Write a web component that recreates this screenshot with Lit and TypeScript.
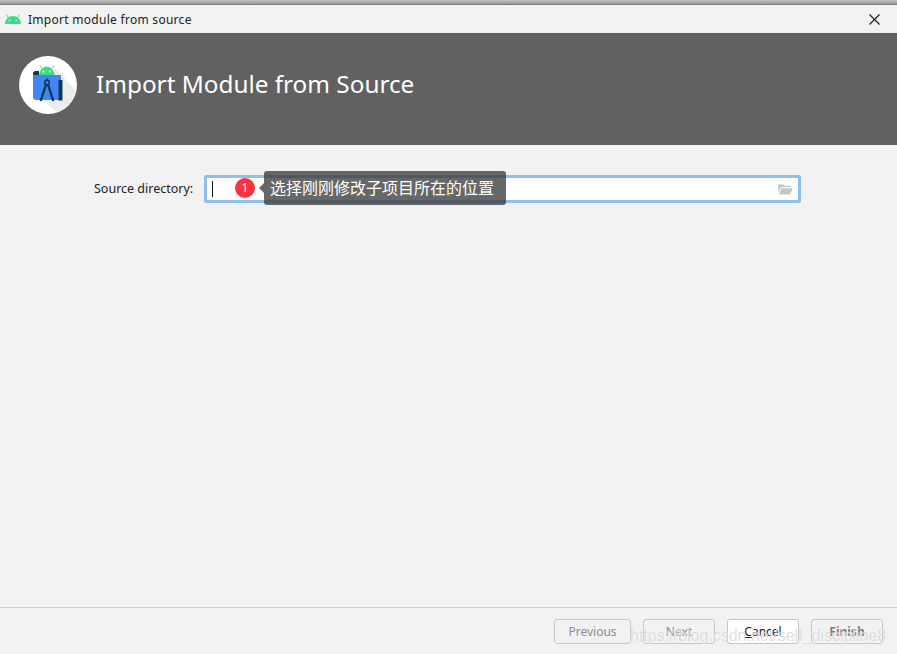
import { LitElement, html, css } from "lit";
import { customElement } from "lit/decorators.js";

@customElement("app-root")
export class AppRoot extends LitElement {
  static styles = css`
    :host { display: flex; flex-direction: column; width: 897px; height: 654px; background: #f2f2f2; overflow: hidden; position: relative; font-family: "Noto Sans", "Noto Sans CJK SC", sans-serif; color: #1a1a1a; }
    .topstrip { height: 5px; flex: none; background: linear-gradient(#c4c4c4, #a0a0a0 70%, #6a6a6a); }
    .titlebar { height: 28px; flex: none; display: flex; align-items: center; padding: 0 17px 0 5px; gap: 7px; font-size: 12px; letter-spacing: 0.28px; color: #222; background: #f2f2f2; }
    .titlebar .t { flex: 1; }
    .banner { height: 112px; box-sizing: border-box; flex: none; background: #616161; display: flex; align-items: center; padding: 0 0 8px 19px; gap: 19px; }
    .logo { width: 58px; height: 58px; flex: none; display: block; }
    .banner h1 { margin: 0 0 3px; font-size: 24.3px; font-weight: 400; color: #fff; }
    .content { flex: 1; padding: 30px 96px 0 94px; display: flex; align-items: flex-start; gap: 11px; }
    .label { font-size: 12.5px; line-height: 28px; height: 28px; white-space: nowrap; color: #222; }
    .field { flex: 1; height: 28px; box-sizing: border-box; border: 3px solid #90bfee; border-radius: 2px; background: #fff; display: flex; align-items: center; padding: 0 5px 0 5px; justify-content: space-between; }
    .caret { width: 1px; height: 16px; background: #111; }
    .footer { height: 47px; box-sizing: border-box; flex: none; border-top: 1px solid #d0d0d0; display: flex; justify-content: flex-end; align-items: flex-start; padding: 11px 14px 0 0; gap: 12px; }
    .btn { height: 25px; box-sizing: border-box; border: 1px solid #c8c8c8; border-radius: 3px; font-size: 12px; line-height: 23px; text-align: center; color: #8c8c8c; width: 72px; }
    .btn.prev { width: 77px; }
    .btn.cancel { background: #fff; border-color: #c4c4c4; color: #1a1a1a; }
    .btn.finish { font-weight: 700; color: #7e7e7e; }
    .u { text-decoration: underline; }
    .badge { position: absolute; left: 235px; top: 178px; width: 20px; height: 20px; border-radius: 50%; background: #f9333b; color: #fff; font-size: 12px; line-height: 20px; text-align: center; }
    .tip { position: absolute; left: 264px; top: 171px; width: 242px; height: 34px; box-sizing: border-box; background: rgba(60, 60, 60, 0.78); border-radius: 3px; color: #fff; font-size: 16px; line-height: 34px; padding-left: 6px; white-space: nowrap; }
    .tip::before { content: ""; position: absolute; left: -5px; top: 12px; border: 5px solid transparent; border-left: 0; border-right-color: rgba(60, 60, 60, 0.78); }
    .wm { position: absolute; left: 630px; top: 626px; font-family: "Liberation Sans", sans-serif; font-size: 16px; line-height: 20px; color: rgba(200, 200, 200, 0.6); white-space: nowrap; text-shadow: 0 0 1px rgba(255,255,255,.8); }
  `;

  render() {
    return html`
      <div class="topstrip"></div>
      <div class="titlebar">
        <svg width="16" height="10" viewBox="0 0 16 10" style="display:block;flex:none">
          <path d="M0 10 A8 8 0 0 1 16 10 Z" fill="#3ddc84"/>
          <path d="M3.2 3.4 1.8 .8M12.8 3.4 14.2 .8" stroke="#3ddc84" stroke-width="1" stroke-linecap="round"/>
          <circle cx="4.7" cy="6.6" r=".8" fill="#f2f2f2"/><circle cx="11.3" cy="6.6" r=".8" fill="#f2f2f2"/>
        </svg>
        <span class="t">Import module from source</span>
        <svg width="11" height="11" viewBox="0 0 11 11"><path d="M.5.5l10 10M10.5.5l-10 10" stroke="#222" stroke-width="1.2"/></svg>
      </div>
      <div class="banner">
        <svg class="logo" viewBox="0 0 58 58">
          <circle cx="29" cy="29" r="29" fill="#fff"/>
          <path d="M36 12 L57 35 A29 29 0 0 1 38 56.5 L24 44 Z" fill="#ececec"/>
          <path d="M20 19.5 A7.8 9 0 0 1 35.6 19.5 Z" fill="#3ddc84"/>
          <path d="M23 12.5 21 9.5M33 12.5 35 9.5" stroke="#3ddc84" stroke-width="1"/>
          <circle cx="24.5" cy="15.5" r=".9" fill="#fff"/><circle cx="31" cy="15.5" r=".9" fill="#fff"/>
          <path d="M17 15 H20 V20 H14 V17.5 A2.5 2.5 0 0 1 17 15 Z" fill="#0d3a52"/>
          <path d="M14 19 H42 V44 H17 Q14 44 14 41 Z" fill="#4285f4"/>
          <path d="M39.5 24 H43.5 V44.5 H39.5 Z" fill="#0d3a52"/>
          <circle cx="28" cy="26.5" r="2.3" fill="none" stroke="#0d3a52" stroke-width="1.5"/>
          <path d="M28 22.5 V24" stroke="#0d3a52" stroke-width="1.5"/>
          <path d="M26.8 29 22 44M29.2 29 34 44" stroke="#0d3a52" stroke-width="2.4" stroke-linecap="round"/>
        </svg>
        <h1>Import Module from Source</h1>
      </div>
      <div class="content">
        <span class="label">Source directory:</span>
        <div class="field">
          <span class="caret"></span>
          <svg width="15" height="11" viewBox="0 0 16 12"><path d="M0 0.5 H6 L7.5 2 H14 V3.5 H3 L0 9 Z" fill="#c3c7ca"/><path d="M3.5 4.5 H16 L13 11.5 H0.5 Z" fill="#c3c7ca"/></svg>
        </div>
      </div>
      <div class="footer">
        <div class="btn prev">Previous</div>
        <div class="btn">Next</div>
        <div class="btn cancel"><span class="u">C</span>ancel</div>
        <div class="btn finish">Finish</div>
      </div>
      <div class="badge">1</div>
      <div class="tip">选择刚刚修改子项目所在的位置</div>
      <div class="wm">https://blog.csdn.net/self_discipline8</div>
    `;
  }
}
